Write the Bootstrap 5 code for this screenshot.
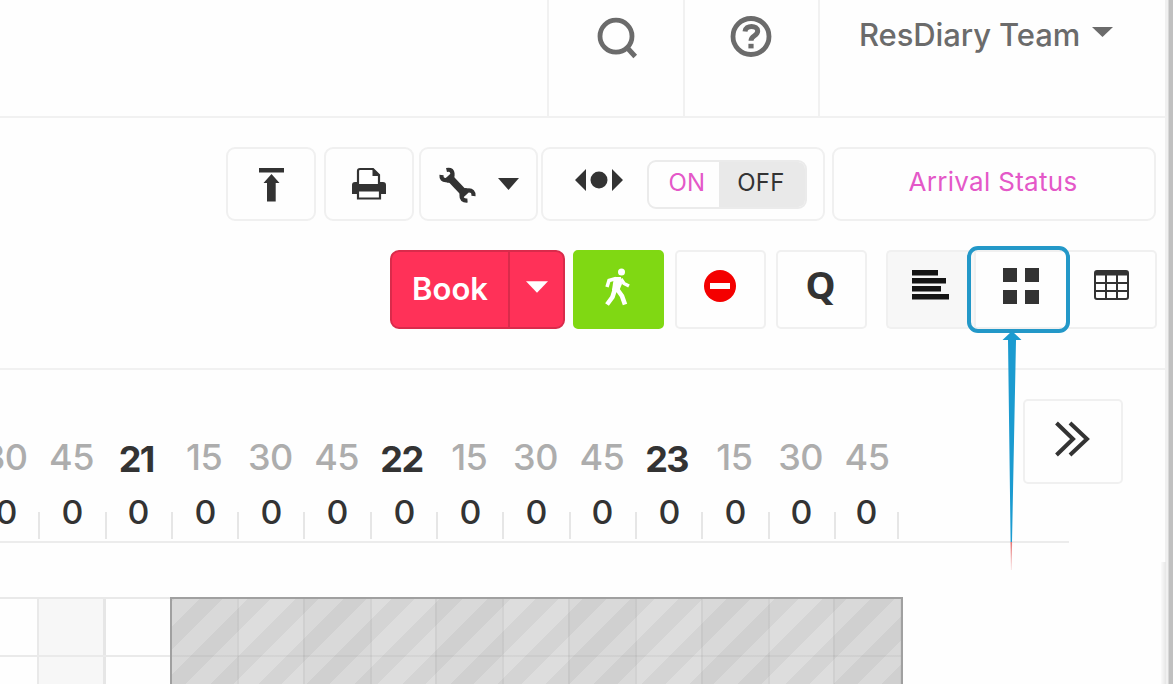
<!DOCTYPE html>
<html lang="en">
<head>
  <meta charset="UTF-8">
  <meta name="viewport" content="width=device-width, initial-scale=1.0">
  <title>ResDiary</title>
  <link rel="stylesheet" href="https://cdn.jsdelivr.net/npm/bootstrap@5.3.0/dist/css/bootstrap.min.css">
  <style>
    body {
      width: 1173px;
      height: 684px;
      background-color: #fefefe;
      color: #333;
      font-family: Inter, "Liberation Sans", sans-serif;
      line-height: 1;
    }
    svg {
      display: block;
      flex: none;
    }
    .page-main {
      width: 1165px;
      flex: none;
    }
    .page-edge {
      width: 8px;
      flex: none;
      background: linear-gradient(90deg, #f0f0f0 0 3px, #d8d8d8 3px 4px, #c0c0c0 4px);
    }
    .edge-shade {
      position: absolute;
      left: 1161px;
      top: 562px;
      width: 5px;
      height: 122px;
      background: linear-gradient(90deg, #fafafa, #e6e6e6);
    }

    /* top bar */
    .topbar {
      height: 118px;
      border-bottom: 2px solid #f1f1f1;
      color: #6b6b6b;
    }
    .topbar-cell {
      width: 135.4px;
      padding-top: 16px;
      border-left: 2px solid #f1f1f1;
    }
    .topbar-user {
      width: 347px;
      padding: 19px 0 0 39px;
      border-left: 2px solid #f1f1f1;
      font-size: 31px;
      font-weight: 500;
    }
    .user-name {
      width: 233px;
      letter-spacing: -.1px;
      white-space: nowrap;
    }

    /* toolbars */
    .tools-top {
      height: 74px;
      margin-top: 29px;
      padding-left: 226px;
    }
    .tools-bottom {
      height: 79px;
      margin-top: 29px;
      padding-left: 390px;
    }
    .tool {
      flex: none;
      padding: 0;
      display: flex;
      justify-content: center;
      background-color: #fefefe;
      border: 2px solid #f0f0f0;
      border-radius: 9px;
      color: #333;
      line-height: 1;
    }
    .tools-bottom .tool {
      border-radius: 5px;
    }
    .toggle {
      width: 160px;
      height: 49px;
      margin-top: 11px;
      border: 2px solid #ebebeb;
      border-radius: 9px;
      overflow: hidden;
      font-size: 24px;
    }
    .toggle-on {
      width: 70px;
      padding-top: 9px;
      padding-left: 6px;
    }
    .toggle-off {
      padding-top: 9px;
      padding-right: 2px;
      background-color: #e9e9e9;
    }
    .toggle-on,
    .toggle-off {
      letter-spacing: .3px;
    }
    .pink {
      color: #e458c8;
    }
    .arrival {
      padding-top: 20px;
      padding-right: 2px;
      font-size: 26px;
      letter-spacing: .3px;
    }
    .book {
      width: 175px;
      height: 79px;
      border: 2px solid #d92b4b;
      border-radius: 9px;
      background-color: #ff3158;
      color: #fff;
      font-size: 31px;
      font-weight: 600;
    }
    .book-label {
      width: 118px;
      padding-top: 21px;
      border-right: 2px solid #d92b4b;
    }
    .tools-bottom .walk-in {
      background-color: #80d813;
      border-color: #80d813;
    }
    .queue {
      padding-top: 13px;
      padding-right: 2px;
      font-family: "Noto Sans", "DejaVu Sans", sans-serif;
      font-size: 38px;
      font-weight: 700;
    }
    .view-on {
      background-color: #f7f7f7;
    }
    .highlight {
      position: absolute;
      left: 967px;
      top: 246px;
    }
    .divider {
      height: 2px;
      margin-top: 39px;
      background-color: #f1f1f1;
    }

    /* time scale */
    .hours {
      height: 130px;
    }
    .slots {
      width: 901px;
      flex: none;
    }
    .slot {
      width: 66.3px;
      flex: none;
      text-align: center;
    }
    .hours .slot:first-child {
      margin-left: -28px;
    }
    .counts .slot:first-child {
      margin-left: -26px;
    }
    .hours .slot {
      padding-top: 69px;
      color: #adadad;
      font-size: 36px;
      font-weight: 500;
      letter-spacing: -.5px;
    }
    .hours .hour {
      padding-top: 71px;
      padding-right: 3px;
      color: #333;
      font-weight: 700;
      letter-spacing: -1.5px;
    }
    .next-page {
      width: 100px;
      height: 85px;
      margin: 29px 0 0 122px;
      border-radius: 5px;
    }
    .counts {
      width: 1069px;
      height: 43px;
      border-bottom: 2px solid #ececec;
      font-size: 32px;
      font-weight: 500;
    }
    .counts .slot {
      height: 39px;
      padding-right: 2px;
      background: linear-gradient(#e6e6e6, #e6e6e6) right bottom / 2px 27px no-repeat;
    }
    .counts .slot:last-child {
      width: 63.6px;
    }
    .count {
      display: inline-block;
      transform: translateY(-3px) scaleX(1.06);
    }

    /* diary grid */
    .diary {
      width: 903px;
      height: 87px;
      margin-top: 54px;
    }
    .open-slots {
      width: 170px;
      height: 87px;
      border-top: 2px solid #e9e9e9;
      background: linear-gradient(#eaeaea, #eaeaea) 0 56px / 100% 2px no-repeat,
        linear-gradient(90deg, transparent 0 37px, #e9e9e9 37px 39px, #f7f7f7 39px 103px, #e6e6e6 103px 106px, transparent 106px);
    }
    .closed-slots {
      width: 733px;
      height: 87px;
      border: 2px solid #a0a0a0;
      border-bottom: 0;
      background: linear-gradient(rgba(0, 0, 0, .04), rgba(0, 0, 0, .04)) 0 56px / 100% 2px no-repeat,
        repeating-linear-gradient(90deg, rgba(0, 0, 0, .018) 0 65px, rgba(0, 0, 0, .05) 65px 67px, transparent 67px 130.6px, rgba(0, 0, 0, .06) 130.6px 132.7px),
        repeating-linear-gradient(135deg, #d4d4d4 0 2.1px, #dddddd 2.1px 19.1px, #d4d4d4 19.1px 33.94px);
    }
  </style>
</head>
<body class="d-flex overflow-hidden position-relative">
  <main class="page-main">
    <header class="topbar d-flex justify-content-end">
      <div class="topbar-cell d-flex justify-content-center">
        <svg width="44" height="44" viewBox="0 0 44 44" fill="none" stroke="#6b6b6b"><circle cx="22" cy="20.2" r="16" stroke-width="4.8"/><path d="M32.5 31l8.7 9.5" stroke-width="5"/></svg>
      </div>
      <div class="topbar-cell d-flex justify-content-center">
        <svg width="42" height="42" viewBox="0 0 42 42" fill="none" stroke="#6b6b6b"><circle cx="21" cy="20.5" r="18" stroke-width="4.8"/><path d="M15 15.5c.5-7 12.700-6.500 12.700-.5 0 5-6.700 4.500-6.700 9.800" stroke-width="5"/><path d="M18.400 27.800h5.200v4.600h-5.200z" fill="#6b6b6b" stroke="none"/></svg>
      </div>
      <div class="topbar-user d-flex">
        <span class="user-name">ResDiary Team</span>
        <svg class="mt-2" width="21" height="10" viewBox="0 0 21 10"><path d="M0 0h21L10.500 10z" fill="#6b6b6b"/></svg>
      </div>
    </header>

    <div class="tools-top d-flex">
      <div class="tool" style="width: 90px">
        <svg class="mt-3" width="26" height="38" viewBox="0 0 26 38" fill="#333"><path d="M1 3h25v4.500H1zM13.500 9l8 9h-3.800v18.500H9V18H5.500z"/></svg>
      </div>
      <div class="tool" style="width: 90px; margin-left: 8px">
        <svg class="mt-3" width="36" height="38" viewBox="0 0 36 38"><path d="M1 20q0-3 3-3h28q3 0 3 3v9h-5v-5H6v5H1z" fill="#333"/><path d="M7 20V6q0-2 2-2h13l6 6v10z" fill="#fff" stroke="#333" stroke-width="2.200"/><path d="M21.500 3v8H29z" fill="#333"/><path d="M3 19h30v6H3z" fill="#333"/><path d="M7 25.500h22v8H7z" fill="#fff" stroke="#333" stroke-width="2.200"/></svg>
      </div>
      <div class="tool" style="width: 119px; margin-left: 5px">
        <svg class="mt-3" width="38" height="40" viewBox="0 0 38 40" fill="none" stroke="#333"><path d="M10 11L28 30" stroke-width="7.500"/><path d="M8.500 5Q15 3.500 14.500 10.500T8.500 15Q3 15.500 3.500 10M29.500 35.500Q23 36 23.500 30T30 25.500Q36 25 35.500 31" stroke-width="4.200"/></svg>
        <svg width="21" height="12" viewBox="0 0 21 12" style="margin: 29px 0 0 22px"><path d="M0 0h21L10.500 12z" fill="#333"/></svg>
      </div>
      <div class="tool justify-content-start" style="width: 284px; margin-left: 3px">
        <svg width="48" height="22" viewBox="0 0 48 22" fill="#333" style="margin: 20px 24px 0 32px"><path d="M0 11L11 0v22zM37 0l11 11-11 11z"/><circle cx="24" cy="11" r="8.500"/></svg>
        <div class="toggle d-flex">
          <div class="toggle-on pink text-center">ON</div>
          <div class="toggle-off flex-fill text-center">OFF</div>
        </div>
      </div>
      <div class="tool arrival pink" style="width: 324px; margin-left: 7px">Arrival Status</div>
    </div>

    <div class="tools-bottom d-flex">
      <div class="book d-flex">
        <div class="book-label text-center">Book</div>
        <svg class="mx-auto" width="22" height="12" viewBox="0 0 23 12" style="margin-top: 29px"><path d="M0 0h23L11.500 12z" fill="#fff"/></svg>
      </div>
      <div class="tool walk-in" style="width: 91px; margin-left: 8px">
        <svg class="mt-3" width="26" height="38" viewBox="0 0 26 38" fill="none" stroke="#fff" style="margin-right: 3px"><circle cx="17.500" cy="4" r="3.500" fill="#fff" stroke="none"/><path d="M11 9l6 0 1 7-3 7-7-1 1.500-10z" fill="#fff" stroke="none"/><path d="M12 10.500L5 12.500 3 19" stroke-width="3.500"/><path d="M17 11l3 4.500 5 2.500" stroke-width="3.500"/><path d="M11 21L8.500 29 3 36.500M13 21l5 7 3 8.500" stroke-width="4.600"/></svg>
      </div>
      <div class="tool" style="width: 91px; margin-left: 11px">
        <svg width="32" height="32" viewBox="0 0 32 32" style="margin: 18px 2px 0 0"><circle cx="16" cy="16" r="16" fill="#f40000"/><path d="M6 13h20v6H6z" fill="#fff"/></svg>
      </div>
      <div class="tool queue" style="width: 91px; margin-left: 10px">Q</div>
      <div class="d-flex" style="margin-left: 19px">
        <div class="tool view-on rounded-end-0 border-end-0" style="width: 88px">
          <svg width="38" height="30" viewBox="0 0 38 30" fill="#151515" style="margin: 18px 2px 0 0"><path d="M1 0h26v5.500H1zM1 8h34v5.500H1zM1 16h29v5.500H1zM1 24h37v5.500H1z"/></svg>
        </div>
        <div class="tool rounded-0 border-end-0" style="width: 95px">
          <svg width="38" height="38" viewBox="0 0 38 38" fill="#333" style="margin: 15px 4px 0 0"><path d="M1 1h14v14H1zM23 1h14v14H23zM1 23h14v14H1zM23 23h14v14H23z"/></svg>
        </div>
        <div class="tool rounded-start-0 border-start-0" style="width: 88px">
          <svg width="36" height="30" viewBox="0 0 36 30" style="margin-top: 18px"><rect x="1" y="1" width="33" height="28" rx="2" fill="#fff" stroke="#333" stroke-width="2"/><path d="M1 1h33v4.500H1z" fill="#333"/><path d="M1 13h33M1 21h33M12 4v25M23 4v25" fill="none" stroke="#333" stroke-width="2"/></svg>
        </div>
      </div>
    </div>
    <div class="divider"></div>

    <div class="hours d-flex">
      <div class="slots d-flex">
        <div class="slot">30</div>
        <div class="slot">45</div>
        <div class="slot hour">21</div>
        <div class="slot">15</div>
        <div class="slot">30</div>
        <div class="slot">45</div>
        <div class="slot hour">22</div>
        <div class="slot">15</div>
        <div class="slot">30</div>
        <div class="slot">45</div>
        <div class="slot hour">23</div>
        <div class="slot">15</div>
        <div class="slot">30</div>
        <div class="slot">45</div>
      </div>
      <div class="tool next-page">
        <svg width="38" height="38" viewBox="0 0 38 38" fill="none" stroke="#333" stroke-width="4" style="margin: 19px 3px 0 0"><path d="M3.500 3L20 19 3.500 35M17 3l17 16-17 16"/></svg>
      </div>
    </div>
    <div class="counts">
      <div class="slots d-flex">
        <div class="slot"><span class="count">0</span></div>
        <div class="slot"><span class="count">0</span></div>
        <div class="slot"><span class="count">0</span></div>
        <div class="slot"><span class="count">0</span></div>
        <div class="slot"><span class="count">0</span></div>
        <div class="slot"><span class="count">0</span></div>
        <div class="slot"><span class="count">0</span></div>
        <div class="slot"><span class="count">0</span></div>
        <div class="slot"><span class="count">0</span></div>
        <div class="slot"><span class="count">0</span></div>
        <div class="slot"><span class="count">0</span></div>
        <div class="slot"><span class="count">0</span></div>
        <div class="slot"><span class="count">0</span></div>
        <div class="slot"><span class="count">0</span></div>
      </div>
    </div>

    <div class="diary d-flex">
      <div class="open-slots"></div>
      <div class="closed-slots"></div>
    </div>
  </main>
  <div class="page-edge"></div>
  <div class="edge-shade"></div>

  <!-- callout over the grid view button -->
  <svg class="highlight" width="104" height="326" viewBox="0 0 104 326">
    <defs>
      <linearGradient id="tail" x1="0" y1="0" x2="0" y2="1">
        <stop offset="0" stop-color="#e57373"/>
        <stop offset="1" stop-color="#e57373" stop-opacity=".2"/>
      </linearGradient>
    </defs>
    <rect x="2" y="2" width="99" height="83" rx="9" fill="none" stroke="#2398c8" stroke-width="4"/>
    <path d="M45 85L54.500 94H49L45 296H43.600L41 94H35.500z" fill="#1b9bd0"/>
    <path d="M43.500 296h1.600L44.700 324h-.8z" fill="url(#tail)"/>
  </svg>

  <script src="https://cdn.jsdelivr.net/npm/bootstrap@5.3.0/dist/js/bootstrap.bundle.min.js"></script>
</body>
</html>
